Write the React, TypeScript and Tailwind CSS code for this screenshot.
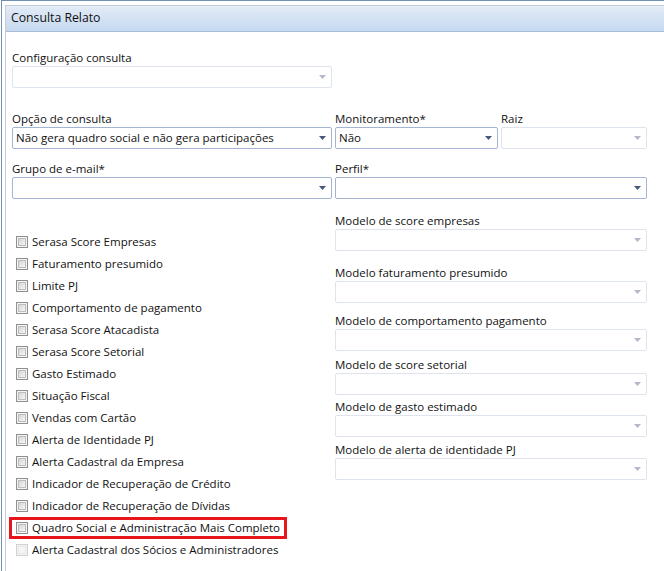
import clsx from "clsx";

const checks = [
  "Serasa Score Empresas",
  "Faturamento presumido",
  "Limite PJ",
  "Comportamento de pagamento",
  "Serasa Score Atacadista",
  "Serasa Score Setorial",
  "Gasto Estimado",
  "Situação Fiscal",
  "Vendas com Cartão",
  "Alerta de Identidade PJ",
  "Alerta Cadastral da Empresa",
  "Indicador de Recuperação de Crédito",
  "Indicador de Recuperação de Dívidas",
];

const models = [
  { label: "Modelo de score empresas", mt: "mt-[13px]" },
  { label: "Modelo faturamento presumido", mt: "mt-[13px]" },
  { label: "Modelo de comportamento pagamento", mt: "mt-[9px]" },
  { label: "Modelo de score setorial", mt: "mt-[5px]" },
  { label: "Modelo de gasto estimado", mt: "mt-[3px]" },
  { label: "Modelo de alerta de identidade PJ", mt: "mt-[4px]" },
];

function Select({ value, disabled }: { value?: string; disabled?: boolean }) {
  return (
    <div
      className={clsx(
        "flex h-[22px] items-center rounded-[2px] border bg-white pr-[5px] pl-[3px]",
        disabled ? "border-[#dde4ee]" : "border-[#a3b5d2]"
      )}
    >
      <span className="flex-1 truncate">{value}</span>
      <svg width="7" height="4" viewBox="0 0 7 4">
        <path d="M0 0h7L3.5 4z" fill={disabled ? "#b3bac6" : "#45587c"} />
      </svg>
    </div>
  );
}

function Field({ label, value, disabled, className }: { label: string; value?: string; disabled?: boolean; className?: string }) {
  return (
    <div className={className}>
      <div className="mb-px h-[16px] pt-px leading-[16px]">{label}</div>
      <Select value={value} disabled={disabled} />
    </div>
  );
}

function Box({ disabled }: { disabled?: boolean }) {
  return (
    <span
      className={clsx(
        "flex h-[12px] w-[12px] shrink-0 items-center justify-center border bg-[#f4f4f4]",
        disabled ? "border-[#d2d2d2]" : "border-[#8e8f8f]"
      )}
    >
      <span
        className={clsx(
          "h-[8px] w-[8px] border",
          disabled ? "border-[#e8e8e8] bg-[#f5f5f5]" : "border-[#bdbdbd] bg-linear-to-br from-[#d6d6d6] to-[#f6f6f6]"
        )}
      />
    </span>
  );
}

function CheckRow({ label, disabled }: { label: string; disabled?: boolean }) {
  return (
    <div className="flex h-[22px] items-center gap-[4px] pl-[4px]">
      <Box disabled={disabled} />
      <span>{label}</span>
    </div>
  );
}

export default function App() {
  return (
    <div className="h-[571px] w-[664px] overflow-hidden bg-white font-['Open_Sans',sans-serif] text-[11.5px] text-[#111111]">
      <div className="ml-px h-full border-t border-l border-[#7290b2] pt-[4px] pl-[3px]">
        <div className="h-full border-t border-l border-[#c5ccd5]">
          <div className="flex h-[26px] items-center border-b border-[#a7bdd8] bg-linear-to-b from-[#e3ebf6] to-[#c6d9f0] pl-[5px] text-[12.25px]">
            Consulta Relato
          </div>

          <div className="pt-[17px] pl-[6px]">
            <Field label="Configuração consulta" disabled className="w-[320px]" />

            <div className="mt-[22px] flex gap-[3px]">
              <Field label="Opção de consulta" value="Não gera quadro social e não gera participações" className="w-[320px]" />
              <Field label="Monitoramento*" value="Não" className="w-[163px]" />
              <Field label="Raiz" disabled className="w-[146px]" />
            </div>

            <div className="mt-[11px] flex gap-[3px]">
              <Field label="Grupo de e-mail*" className="w-[320px]" />
              <Field label="Perfil*" className="w-[312px]" />
            </div>

            <div className="flex gap-[3px]">
              <div className="w-[320px] pt-[32px]">
                {checks.map((c) => (
                  <CheckRow key={c} label={c} />
                ))}
                <div className="-ml-[3px] flex h-[22px] w-[278px] items-center gap-[4px] border-[3px] border-[#e8161b] pl-[4px]">
                  <Box />
                  <span>Quadro Social e Administração Mais Completo</span>
                </div>
                <CheckRow label="Alerta Cadastral dos Sócios e Administradores" disabled />
              </div>
              <div className="w-[312px]">
                {models.map((m) => (
                  <Field key={m.label} label={m.label} disabled className={m.mt} />
                ))}
              </div>
            </div>
          </div>
        </div>
      </div>
    </div>
  );
}
